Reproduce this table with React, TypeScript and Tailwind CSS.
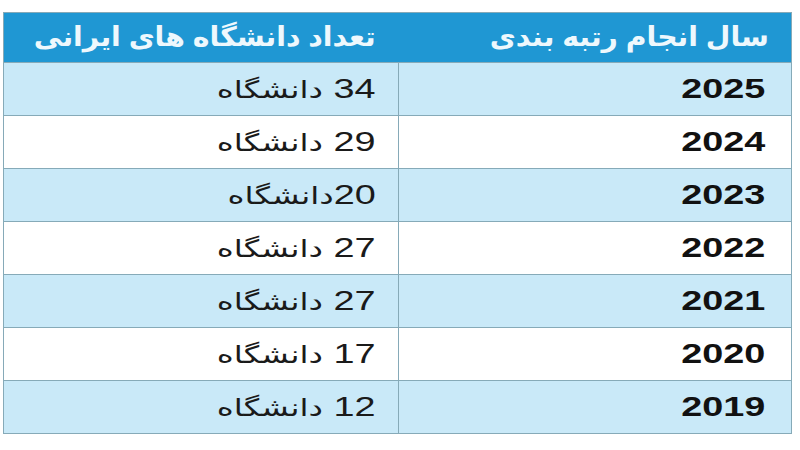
import React from "react";

const rows = [
  { year: "2025", n: "34", sep: " " },
  { year: "2024", n: "29", sep: " " },
  { year: "2023", n: "20", sep: "" },
  { year: "2022", n: "27", sep: " " },
  { year: "2021", n: "27", sep: " " },
  { year: "2020", n: "17", sep: " " },
  { year: "2019", n: "12", sep: " " },
];

const font = { fontFamily: '"Liberation Sans", "DejaVu Sans", sans-serif' };

export default function App() {
  return (
    <div className="w-[800px] h-[450px] bg-white pt-[12px] pl-[3px]" style={font}>
      <div dir="rtl" className="w-[789px] border border-[#86aab8]">
        <div className="flex h-[49px] bg-[#1f97d3] text-[#eef8fd]">
          <div className="w-[393px] flex items-center pr-[22px]">
            <span className="inline-block origin-right scale-x-[1.05] text-[27px] font-bold leading-none">سال انجام رتبه بندی</span>
          </div>
          <div className="flex-1 flex items-center pr-[22px]">
            <span className="inline-block origin-right scale-x-[1.05] text-[27px] font-bold leading-none">تعداد دانشگاه های ایرانی</span>
          </div>
        </div>
        {rows.map((r, i) => (
          <div
            key={r.year}
            className={`flex h-[53px] border-t border-[#86aab8] ${i % 2 === 0 ? "bg-[#c9e9f8]" : "bg-white"}`}
          >
            <div className="w-[393px] flex items-center pr-[26px] border-l border-[#86aab8]">
              <span className="inline-block origin-right scale-x-[1.35] text-[28px] font-bold leading-none text-[#111]">{r.year}</span>
            </div>
            <div className="flex-1 flex items-center pr-[22px]">
              <span className="inline-block origin-right scale-x-[1.35] text-[28px] leading-none text-[#1a1a1a]">
                {r.n}
                {r.sep}
                <span className="text-[24px]">دانشگاه</span>
              </span>
            </div>
          </div>
        ))}
      </div>
    </div>
  );
}
